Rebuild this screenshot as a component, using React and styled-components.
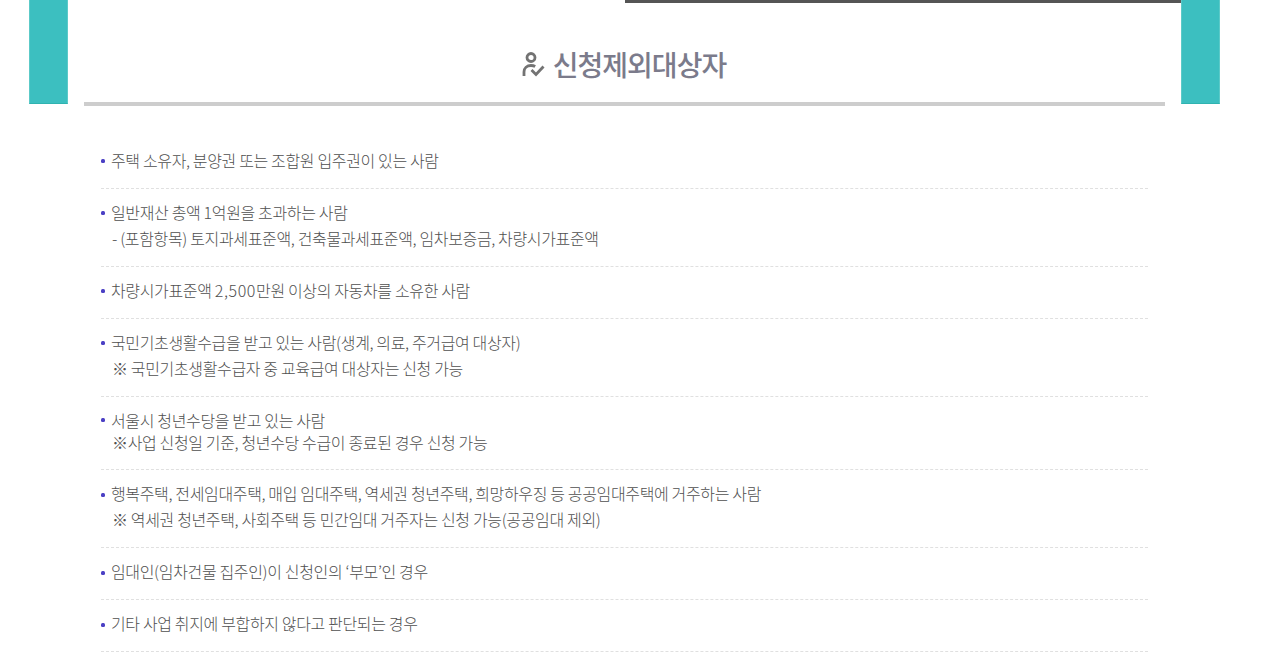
import React from "react";
import styled, { createGlobalStyle } from "styled-components";

const GlobalStyle = createGlobalStyle`
	html, body {
		margin: 0;
		padding: 0;
		background: #fff;
		overflow: hidden;
	}
	body {
		font-family: "Noto Sans CJK KR", "Noto Sans", sans-serif;
	}
`;

const Page = styled.div`
	width: 1280px;
	height: 669px;
	overflow: hidden;
`;

const Frame = styled.div`
	width: 1191px;
	margin-left: 29px;
`;

const TopBar = styled.div`
	display: flex;
	justify-content: space-between;
	height: 104px;
`;

const Tab = styled.div`
	width: 39px;
	height: 104px;
	box-sizing: border-box;
	background: #3cbfc0;
	border-bottom: 1px solid #2fb3b0;
	border-left: 1px solid #5ccac8;
	border-right: 1px solid #5ccac8;
`;

const HeadCenter = styled.div`
	flex: 1;
	display: flex;
	flex-direction: column;
`;

const TopLine = styled.div`
	width: 556px;
	height: 3px;
	margin-left: auto;
	background: #555;
`;

const Title = styled.h2`
	display: flex;
	align-items: center;
	justify-content: center;
	gap: 8px;
	margin: 41px 0 0 -1px;
	height: 40px;
	font-size: 28px;
	line-height: 40px;
	font-weight: 500;
	letter-spacing: -1px;
	color: #7b7b8b;
`;

const Content = styled.div`
	width: 1081px;
	margin: -2px 0 0 55px;
`;

const Rule = styled.div`
	height: 4px;
	background: #cdcdcd;
`;

const List = styled.ul`
	list-style: none;
	margin: 30.5px 0 0 17px;
	padding: 0;
	width: 1047px;
`;

const Item = styled.li`
	position: relative;
	padding: ${(p) => (p.$tight ? "12px 0 16px 10px" : "10px 0 15px 10px")};
	border-bottom: 1px dashed #e0e0e0;
	font-size: 16px;
	font-weight: 300;
	line-height: ${(p) => (p.$tight ? "22px" : "26.1px")};
	letter-spacing: -0.35px;
	color: #505050;
	&::before {
		content: "";
		position: absolute;
		left: 0;
		top: ${(p) => (p.$tight ? "21px" : "22.5px")};
		width: 4px;
		height: 4px;
		border-radius: 1.5px;
		background: #4a3fc4;
	}
`;

const SubLine = styled.div`
	padding-left: 1px;
`;

const Num = styled.span`
	letter-spacing: 0.6px;
`;

const items = [
	{ lines: ["주택 소유자, 분양권 또는 조합원 입주권이 있는 사람"] },
	{ lines: ["일반재산 총액 1억원을 초과하는 사람", "- (포함항목) 토지과세표준액, 건축물과세표준액, 임차보증금, 차량시가표준액"] },
	{ lines: [<React.Fragment key="car">차량시가표준액 <Num>2,500</Num>만원 이상의 자동차를 소유한 사람</React.Fragment>] },
	{ lines: ["국민기초생활수급을 받고 있는 사람(생계, 의료, 주거급여 대상자)", "※ 국민기초생활수급자 중 교육급여 대상자는 신청 가능"] },
	{ lines: ["서울시 청년수당을 받고 있는 사람", "※사업 신청일 기준, 청년수당 수급이 종료된 경우 신청 가능"], tight: true },
	{ lines: ["행복주택, 전세임대주택, 매입 임대주택, 역세권 청년주택, 희망하우징 등 공공임대주택에 거주하는 사람", "※ 역세권 청년주택, 사회주택 등 민간임대 거주자는 신청 가능(공공임대 제외)"] },
	{ lines: ["임대인(임차건물 집주인)이 신청인의 ‘부모’인 경우"] },
	{ lines: ["기타 사업 취지에 부합하지 않다고 판단되는 경우"] },
];

function PersonCheckIcon() {
	return (
		<svg width="23" height="26" viewBox="0 0 23 26" fill="none" stroke="#737373" strokeWidth="2.8">
			<circle cx="9" cy="6.5" r="4" />
			<path d="M2 25v-4c0-4 3-6.5 7-6.5 1.5 0 3 .3 4.2 1" />
			<path d="M9.5 19l4.5 4.5 7.5-8" />
		</svg>
	);
}

export default function App() {
	return (
		<Page>
			<GlobalStyle />
			<Frame>
				<TopBar>
					<Tab />
					<HeadCenter>
						<TopLine />
						<Title>
							<PersonCheckIcon />
							신청제외대상자
						</Title>
					</HeadCenter>
					<Tab />
				</TopBar>
				<Content>
					<Rule />
					<List>
						{items.map((item, n) => (
							<Item key={n} $tight={item.tight}>
								{item.lines.map((line, i) =>
									i === 0 ? <div key={i}>{line}</div> : <SubLine key={i}>{line}</SubLine>
								)}
							</Item>
						))}
					</List>
				</Content>
			</Frame>
		</Page>
	);
}
